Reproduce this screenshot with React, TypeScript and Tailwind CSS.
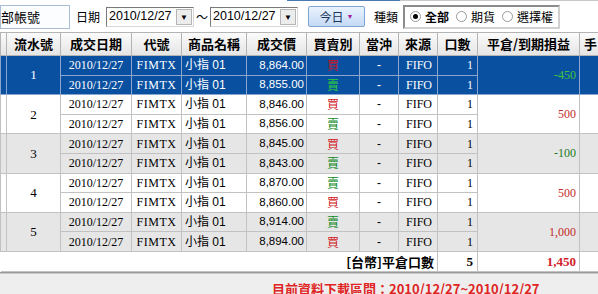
const cjk = "font-['Noto_Sans_CJK_TC',sans-serif]";
const serif = "font-['Liberation_Serif','Noto_Sans_CJK_TC',serif]";
const sans = "font-['Liberation_Sans','Noto_Sans_CJK_TC',sans-serif]";

interface Trade {
  price: string;
  side: "買" | "賣";
}

interface Group {
  no: number;
  trades: Trade[];
  pl: string;
}

const groups: Group[] = [
  { no: 1, trades: [{ price: "8,864.00", side: "買" }, { price: "8,855.00", side: "賣" }], pl: "-450" },
  { no: 2, trades: [{ price: "8,846.00", side: "買" }, { price: "8,856.00", side: "賣" }], pl: "500" },
  { no: 3, trades: [{ price: "8,845.00", side: "買" }, { price: "8,843.00", side: "賣" }], pl: "-100" },
  { no: 4, trades: [{ price: "8,870.00", side: "賣" }, { price: "8,860.00", side: "買" }], pl: "500" },
  { no: 5, trades: [{ price: "8,914.00", side: "賣" }, { price: "8,894.00", side: "買" }], pl: "1,000" },
];

const headers = ["流水號", "成交日期", "代號", "商品名稱", "成交價", "買賣別", "當沖", "來源", "口數", "平倉/到期損益", "手"];

function DateBox() {
  return (
    <div className="flex items-center w-[88px] h-[20px] bg-white border border-t-[#7a7a7a] border-l-[#7a7a7a] border-r-[#d8d8d8] border-b-[#d8d8d8] pl-[2px] pr-[1px]">
      <span className={`${sans} text-[12.5px] text-black flex-1 leading-none whitespace-nowrap`}>2010/12/27</span>
      <span className="flex items-center justify-center w-[16px] h-[16px] bg-[#ececec] border border-[#b5b5b5] text-[8px] text-black leading-none">▼</span>
    </div>
  );
}

function Radio({ on, label }: { on?: boolean; label: string }) {
  return (
    <span className="flex items-center gap-[4px] whitespace-nowrap">
      <span className="flex items-center justify-center w-[11px] h-[11px] rounded-full border border-[#9a9a9a] bg-white">
        {on && <span className="w-[5px] h-[5px] rounded-full bg-black" />}
      </span>
      <span className={`${cjk} text-[12px] ${on ? "font-bold" : ""} text-black`}>{label}</span>
    </span>
  );
}

export default function App() {
  return (
    <div className="w-[598px] h-[294px] overflow-hidden bg-white">
      <div className="h-px flex">
        <div className="ml-[287px] w-[113px] h-px bg-[#4a78b0]" />
        <div className="flex-1 h-px bg-[#c8c8c8]" />
      </div>
      <div className="flex items-center h-[31px]">
        <div className="w-[70px] h-[24px] border border-[#a9bdd6] bg-[#fbfdff] flex items-center overflow-hidden">
          <span className={`${cjk} text-[13px] text-black whitespace-nowrap`}>部帳號</span>
        </div>
        <span className={`${cjk} text-[12px] text-black ml-[6px] mr-[6px]`}>日期</span>
        <DateBox />
        <span className={`${cjk} text-[12px] text-black w-[16px] text-center`}>～</span>
        <DateBox />
        <button className="ml-[10px] w-[57px] h-[21px] rounded-[2px] border border-[#7ea4d4] bg-gradient-to-b from-[#eaf3fd] to-[#c4daf6] flex items-center justify-center gap-[3px]">
          <span className={`${cjk} text-[12px] text-[#1c3560]`}>今日</span>
          <span className="text-[7px] text-[#a0209c] leading-none">▼</span>
        </button>
        <span className={`${cjk} text-[12px] text-black ml-[9px]`}>種類</span>
        <div className="ml-[5px] w-[157px] h-[24px] border-2 border-t-[#8c8c8c] border-l-[#8c8c8c] border-r-[#d0d0d0] border-b-[#d0d0d0] flex items-center gap-[7px] pl-[5px]">
          <Radio on label="全部" />
          <Radio label="期貨" />
          <Radio label="選擇權" />
        </div>
      </div>

      <table className="table-fixed border-collapse w-[650px]">
        <colgroup>
          <col className="w-[6px]" />
          <col className="w-[54px]" />
          <col className="w-[71px]" />
          <col className="w-[50px]" />
          <col className="w-[65px]" />
          <col className="w-[60px]" />
          <col className="w-[53px]" />
          <col className="w-[39px]" />
          <col className="w-[39px]" />
          <col className="w-[40px]" />
          <col className="w-[102px]" />
          <col className="w-[71px]" />
        </colgroup>
        <thead>
          <tr className="h-[23px] bg-gradient-to-b from-[#fbfbfb] to-[#e4e4e4]">
            <th className="border border-[#b4b4b4]" />
            {headers.map((h) => (
              <th key={h} className={`${cjk} border border-[#b4b4b4] text-[13px] font-bold text-black whitespace-nowrap overflow-hidden ${h === "手" ? "text-left pl-[4px]" : "text-center"}`}>
                {h}
              </th>
            ))}
          </tr>
        </thead>
        <tbody>
          {groups.map((g) => {
            const sel = g.no === 1;
            const bg = sel ? "bg-[#0a50a0]" : g.no % 2 === 1 ? "bg-[#e6e6e6]" : "bg-white";
            const bd = sel ? "border-[#8aa6cf]" : "border-[#c2c2c2]";
            const txt = sel ? "text-white" : "text-black";
            const neg = g.pl.startsWith("-");
            const plColor = neg ? (sel ? "text-[#3ec43e]" : "text-[#1a7a1a]") : "text-[#c42a2a]";
            return g.trades.map((t, i) => (
              <tr key={`${g.no}-${i}`} className={`h-[19.6px] ${bg}`}>
                {i === 0 && (
                  <>
                    <td rowSpan={2} className={`border ${bd}`} />
                    <td rowSpan={2} className={`${serif} border ${bd} ${txt} text-[13px] text-center`}>{g.no}</td>
                  </>
                )}
                <td className={`${serif} border ${bd} ${txt} text-[12px] text-center leading-none`}>2010/12/27</td>
                <td className={`${serif} border ${bd} ${txt} text-[12px] text-center leading-none tracking-[0.5px]`}>FIMTX</td>
                <td className={`${sans} border ${bd} ${txt} text-[12px] pl-[3px] leading-none whitespace-nowrap`}>小指 01</td>
                <td className={`${sans} border ${bd} ${txt} text-[11.5px] text-right pr-[2px] leading-none`}>{t.price}</td>
                <td className={`${cjk} border ${bd} text-[12px] text-center leading-none ${t.side === "買" ? "text-[#d0161c]" : sel ? "text-[#2ccd3a]" : "text-[#0e8a1e]"}`}>{t.side}</td>
                <td className={`${sans} border ${bd} ${txt} text-[12px] text-center leading-none`}>-</td>
                <td className={`${serif} border ${bd} ${txt} text-[12px] pl-[7px] leading-none`}>FIFO</td>
                <td className={`${serif} border ${bd} ${txt} text-[12px] text-right pr-[4px] leading-none`}>1</td>
                {i === 0 && (
                  <>
                    <td rowSpan={2} className={`${serif} border ${bd} ${plColor} text-[12px] text-right pr-[3px]`}>{g.pl}</td>
                    <td rowSpan={2} className={`border ${bd}`} />
                  </>
                )}
              </tr>
            ));
          })}
          <tr className="h-[20px] bg-white">
            <td colSpan={9} className={`${cjk} border border-[#c2c2c2] border-l-0 text-[13px] font-bold text-black text-right pr-[3px] leading-none`}>[台幣]平倉口數</td>
            <td className={`${serif} border border-[#c2c2c2] text-[13px] font-bold text-black text-right pr-[4px] leading-none`}>5</td>
            <td className={`${serif} border border-[#c2c2c2] text-[13px] font-bold text-[#d0202a] text-right pr-[3px] leading-none`}>1,450</td>
            <td className="border border-[#c2c2c2]" />
          </tr>
        </tbody>
      </table>

      <div className="border-t border-[#9a9a9a] h-[30px] bg-[#eeeeee] shadow-[inset_0_1px_0_#c8c8c8] pl-[272px] pt-[3px]">
        <span className={`${cjk} text-[13px] font-bold text-[#e02424] whitespace-nowrap`}>目前資料下載區間：2010/12/27~2010/12/27</span>
      </div>
    </div>
  );
}
